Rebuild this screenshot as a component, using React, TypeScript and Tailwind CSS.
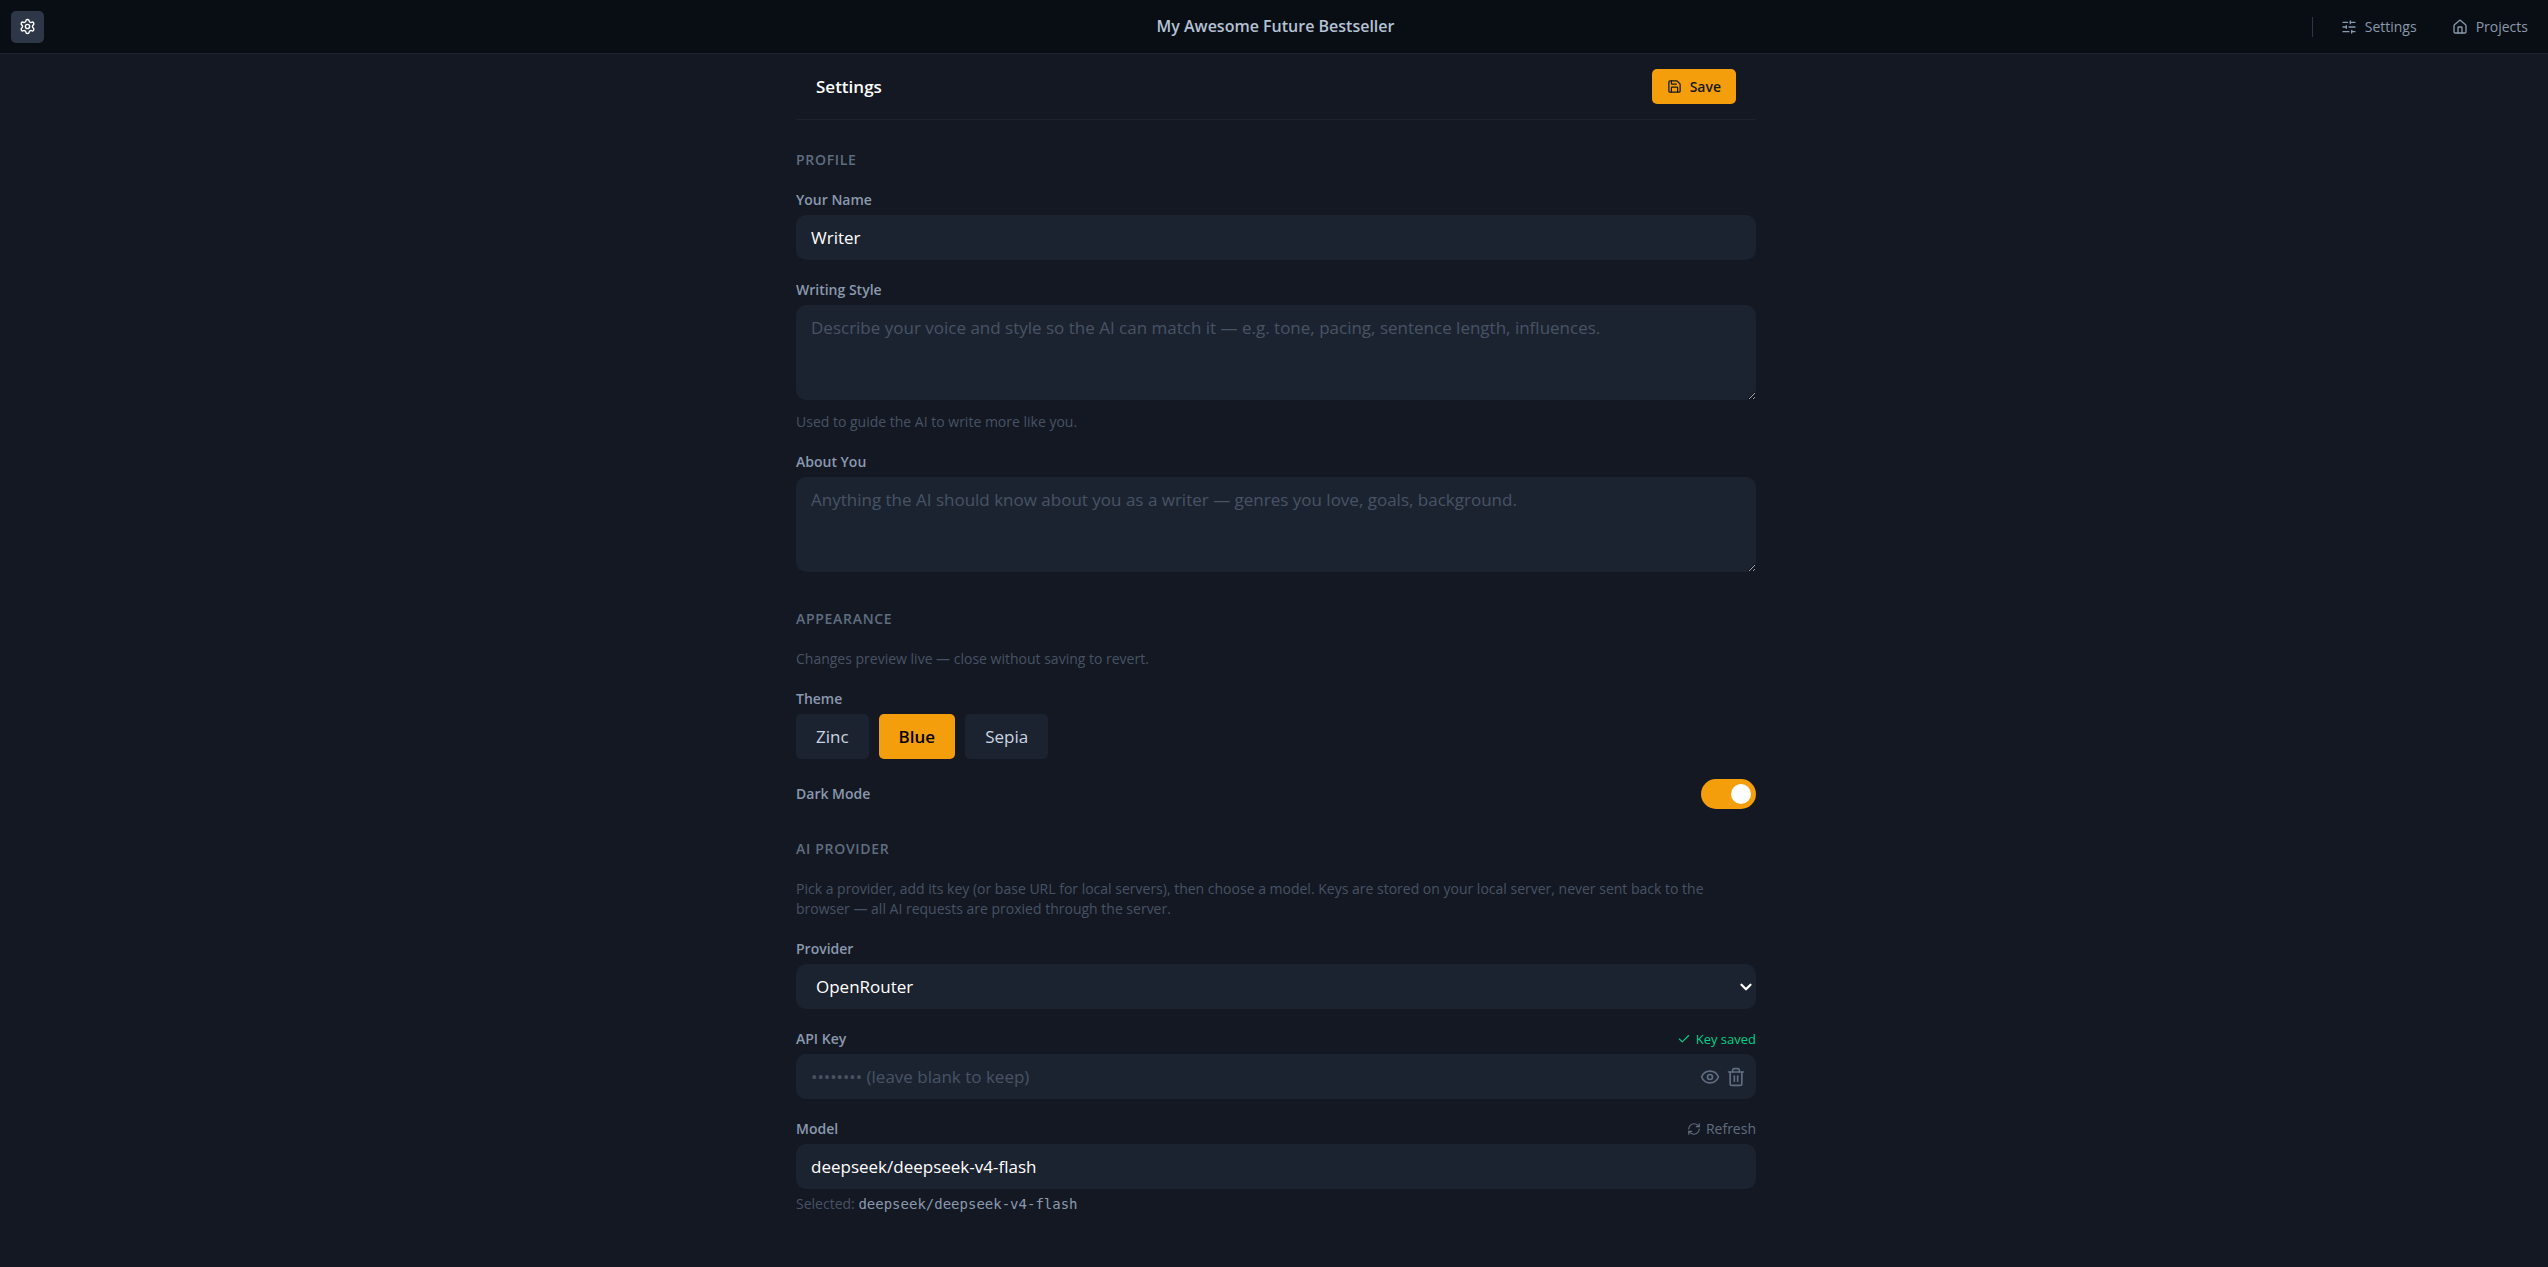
import { useState } from "react";
import type { ReactNode } from "react";
import { Check, ChevronDown, Eye, House, RefreshCw, Save, Settings, SlidersHorizontal, Trash2 } from "lucide-react";

const themes = ["Zinc", "Blue", "Sepia"];
const providers = ["OpenRouter", "OpenAI", "Anthropic", "Ollama"];

const fieldClass =
  "block w-full rounded-[10px] bg-[#1c2330] text-[17px] leading-[25px] text-white placeholder:text-[#475365] outline-none";

function Section({ title, children }: { title: string; children: ReactNode }) {
  return (
    <section className="flex flex-col gap-5">
      <h3 className="text-[14px] leading-5 font-semibold tracking-wider uppercase text-[#5f6d80]">{title}</h3>
      {children}
    </section>
  );
}

function Label({ htmlFor, children }: { htmlFor: string; children: ReactNode }) {
  return (
    <label htmlFor={htmlFor} className="text-[14px] leading-5 font-semibold text-[#8a99ae]">
      {children}
    </label>
  );
}

function Hint({ children }: { children: ReactNode }) {
  return <p className="text-[14px] leading-5 text-[#475365]">{children}</p>;
}

export default function App() {
  const [theme, setTheme] = useState("Blue");
  const [dark, setDark] = useState(true);

  return (
    <div className="min-h-screen bg-[#141822] font-['Open_Sans','Noto_Sans',sans-serif] text-white">
      <header className="grid grid-cols-[1fr_auto_1fr] items-center h-[54px] border-b border-[#1c2330] bg-[#090e14] pl-[11px] pr-5">
        <div>
          <button
            aria-label="Menu"
            className="flex items-center justify-center w-[33px] h-8 rounded-[5px] bg-[#2d3748] text-white"
          >
            <Settings size={17} />
          </button>
        </div>
        <h1 className="pl-3 text-center text-[16px] leading-[25px] font-semibold text-[#b4c2d4]">
          My Awesome Future Bestseller
        </h1>
        <nav className="flex items-center justify-end text-[14px] leading-5 text-[#8a99ae]">
          <span className="w-px h-5 mr-7 bg-[#2d3748]" />
          <a href="#settings" className="flex items-center gap-2 mr-[35px]">
            <SlidersHorizontal size={16} />
            Settings
          </a>
          <a href="#projects" className="flex items-center gap-2">
            <House size={16} />
            Projects
          </a>
        </nav>
      </header>

      <div className="pl-1">
        <main className="max-w-[960px] mx-auto">
          <div className="flex items-center justify-between h-[66px] px-5 border-b border-[#1c2330]">
            <h2 className="text-[17px] leading-[25px] font-semibold">Settings</h2>
            <button className="flex items-center gap-2 h-[35px] px-[15px] rounded-[5px] bg-[#f59e0b] text-[14px] leading-5 font-semibold text-[#141822]">
              <Save size={15} />
              Save
            </button>
          </div>

          <form className="flex flex-col gap-[30px] py-[30px]" onSubmit={(e) => e.preventDefault()}>
            <Section title="Profile">
              <div className="flex flex-col gap-[5px]">
                <Label htmlFor="name">Your Name</Label>
                <input id="name" defaultValue="Writer" className={`${fieldClass} h-[45px] px-[15px]`} />
              </div>
              <div className="flex flex-col gap-[5px]">
                <Label htmlFor="style">Writing Style</Label>
                <textarea
                  id="style"
                  className={`${fieldClass} h-[95px] px-[15px] py-[10px] resize-y`}
                  placeholder="Describe your voice and style so the AI can match it — e.g. tone, pacing, sentence length, influences."
                />
                <div className="pt-[7px]">
                  <Hint>Used to guide the AI to write more like you.</Hint>
                </div>
              </div>
              <div className="flex flex-col gap-[5px] pb-[7px]">
                <Label htmlFor="about">About You</Label>
                <textarea
                  id="about"
                  className={`${fieldClass} h-[95px] px-[15px] py-[10px] resize-y`}
                  placeholder="Anything the AI should know about you as a writer — genres you love, goals, background."
                />
              </div>
            </Section>

            <Section title="Appearance">
              <Hint>Changes preview live — close without saving to revert.</Hint>
              <div className="flex flex-col gap-[5px]">
                <span id="theme" className="text-[14px] leading-5 font-semibold text-[#8a99ae]">
                  Theme
                </span>
                <div role="group" aria-labelledby="theme" className="flex gap-[10px]">
                  {themes.map((t) => (
                    <button
                      key={t}
                      type="button"
                      onClick={() => setTheme(t)}
                      className={`h-[45px] px-5 rounded-[5px] text-[17px] leading-[25px] ${
                        t === theme ? "bg-[#f59e0b] font-semibold text-black" : "bg-[#1c2330] text-[#cbd5e0]"
                      }`}
                    >
                      {t}
                    </button>
                  ))}
                </div>
              </div>
              <div className="flex items-center justify-between">
                <Label htmlFor="dark">Dark Mode</Label>
                <input
                  id="dark"
                  type="checkbox"
                  role="switch"
                  checked={dark}
                  onChange={(e) => setDark(e.target.checked)}
                  className="appearance-none flex items-center w-[55px] h-[30px] px-[5px] rounded-full bg-[#2d3748] checked:bg-[#f59e0b] checked:justify-end before:block before:size-5 before:rounded-full before:bg-white"
                />
              </div>
            </Section>

            <Section title="AI Provider">
              <Hint>
                Pick a provider, add its key (or base URL for local servers), then choose a model. Keys are stored on
                your local server, never sent back to the browser — all AI requests are proxied through the server.
              </Hint>
              <div className="flex flex-col gap-[5px]">
                <Label htmlFor="provider">Provider</Label>
                <div className="relative">
                  <select id="provider" className={`${fieldClass} appearance-none h-[45px] px-5`}>
                    {providers.map((p) => (
                      <option key={p}>{p}</option>
                    ))}
                  </select>
                  <ChevronDown
                    size={18}
                    strokeWidth={3}
                    className="absolute right-px inset-y-0 my-auto pointer-events-none"
                  />
                </div>
              </div>
              <div className="flex flex-col gap-[5px]">
                <div className="flex items-center justify-between">
                  <Label htmlFor="key">API Key</Label>
                  <span className="flex items-center gap-[5px] text-[13px] leading-5 text-[#00d084]">
                    <Check size={14} />
                    Key saved
                  </span>
                </div>
                <div className="flex items-center rounded-[10px] bg-[#1c2330] pr-[7px] text-[#5f6d80]">
                  <input
                    id="key"
                    type="password"
                    placeholder="•••••••• (leave blank to keep)"
                    className={`${fieldClass} h-[45px] px-[15px]`}
                  />
                  <button type="button" aria-label="Show key" className="p-[3px]">
                    <Eye size={20} />
                  </button>
                  <button type="button" aria-label="Delete key" className="p-[3px]">
                    <Trash2 size={20} />
                  </button>
                </div>
              </div>
              <div className="flex flex-col gap-[5px]">
                <div className="flex items-center justify-between">
                  <Label htmlFor="model">Model</Label>
                  <button type="button" className="flex items-center gap-[5px] text-[14px] leading-5 text-[#5f6d80]">
                    <RefreshCw size={14} />
                    Refresh
                  </button>
                </div>
                <input
                  id="model"
                  defaultValue="deepseek/deepseek-v4-flash"
                  className={`${fieldClass} h-[45px] px-[15px]`}
                />
                <p className="text-[14px] leading-5 text-[#475365]">
                  Selected:{" "}
                  <code className="font-['DejaVu_Sans_Mono',monospace] text-[14px] text-[#8a99ae]">
                    deepseek/deepseek-v4-flash
                  </code>
                </p>
              </div>
            </Section>
          </form>
        </main>
      </div>
    </div>
  );
}
